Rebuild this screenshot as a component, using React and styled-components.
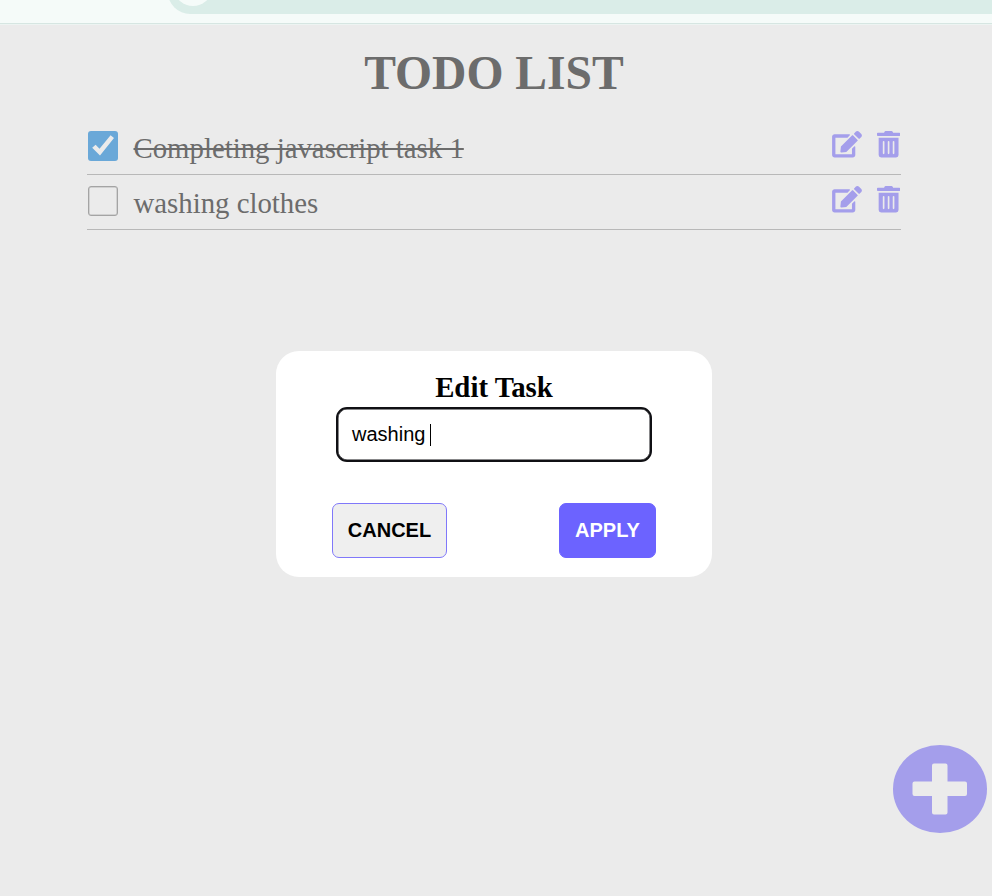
import React from "react";
import styled, { createGlobalStyle } from "styled-components";
import { FaEdit, FaTrashAlt } from "react-icons/fa";

const GlobalStyle = createGlobalStyle`
  * { box-sizing: border-box; }
  body {
    margin: 0;
    background: #ebebeb;
    font-family: "Liberation Serif", "Times New Roman", serif;
    overflow: hidden;
  }
`;

const Page = styled.div`
  position: relative;
  width: 992px;
  height: 896px;
  overflow: hidden;
  background: #ebebeb;
`;

const BrowserBar = styled.header`
  height: 25px;
  background: #f5fbf9;
  padding-left: 168px;
  overflow: hidden;
  box-shadow: inset 0 -1px #edf4f2, inset 0 -2px #d6e6e2;
`;

const AddressPill = styled.div`
  height: 44px;
  margin-top: -30px;
  margin-right: -40px;
  padding: 4px 0 0 7px;
  border-radius: 22px;
  background: #daede8;
`;

const SiteButton = styled.div`
  width: 36px;
  height: 32px;
  border-radius: 50%;
  background: #f5fbf9;
`;

const Main = styled.main`
  width: 814px;
  margin-left: 87px;
  padding-top: 20px;
`;

const Title = styled.h1`
  margin: 0 0 18px;
  height: 57px;
  line-height: 57px;
  font-size: 47.6px;
  text-align: center;
  color: #6c6c6c;
`;

const TaskList = styled.ul`
  list-style: none;
  margin: 0;
  padding: 0;
`;

const Task = styled.li`
  display: flex;
  align-items: flex-start;
  height: 55px;
  padding: 11px 1px 0;
  border-bottom: 1px solid #b8b8b8;
`;

const Checkbox = styled.span`
  display: flex;
  align-items: center;
  justify-content: center;
  width: 30px;
  height: 30px;
  border-radius: 3px;
  border: ${(p) => (p.$checked ? "0" : "1px solid #a4a4a4")};
  box-shadow: ${(p) => (p.$checked ? "none" : "inset 0 0 0 0.5px #b8b8b8")};
  background: ${(p) => (p.$checked ? "#6aa8d8" : "transparent")};
`;

const TaskText = styled.span`
  flex: 1;
  margin-left: 15.5px;
  line-height: 34px;
  font-size: 28.8px;
  color: #6c6c6c;
  text-decoration: ${(p) => (p.$done ? "line-through" : "none")};
  text-decoration-thickness: 2px;
`;

const Actions = styled.span`
  display: flex;
  gap: 15px;
  color: #a49eeb;
`;

const EditIcon = styled(FaEdit)`
  width: 30px;
  height: 26.5px;
`;

const TrashIcon = styled(FaTrashAlt)`
  width: 23.2px;
  height: 26.5px;
`;

const AddButton = styled.button`
  position: absolute;
  left: 892.5px;
  top: 745px;
  width: 94.5px;
  height: 88px;
  padding: 0;
  border: 0;
  border-radius: 50%;
  background: #a49eeb;
  display: flex;
  align-items: center;
  justify-content: center;
`;

const Dialog = styled.section`
  position: absolute;
  left: 276px;
  top: 351px;
  width: 436px;
  height: 226px;
  padding: 19px 56px;
  border-radius: 23px;
  background: #fff;
`;

const DialogTitle = styled.h2`
  margin: 0 0 2px;
  height: 35px;
  line-height: 35px;
  font-size: 28.8px;
  text-align: center;
  color: #000;
`;

const Field = styled.div`
  display: flex;
  align-items: center;
  width: 316px;
  height: 55px;
  margin: 0 4px 41px;
  padding-left: 14px;
  border: 2px solid #101014;
  box-shadow: inset 0 0 0 0.5px #101014;
  border-radius: 11px;
  font: 20px "Liberation Sans", Arial, sans-serif;
  white-space: pre;
  color: #000;
`;

const Caret = styled.span`
  width: 1px;
  height: 22px;
  margin-left: -1px;
  background: #000;
`;

const Buttons = styled.div`
  display: flex;
  justify-content: space-between;
`;

const DialogButton = styled.button`
  width: ${(p) => (p.$primary ? 97 : 115)}px;
  height: 55px;
  padding: 0 0 1px;
  border: 1px solid ${(p) => (p.$primary ? "#6c63ff" : "#8078fa")};
  border-radius: 7px;
  background: ${(p) => (p.$primary ? "#6c63ff" : "#efefef")};
  color: ${(p) => (p.$primary ? "#fff" : "#000")};
  font: bold 20px "Liberation Sans", Arial, sans-serif;
`;

const tasks = [
  { text: "Completing javascript task 1", done: true },
  { text: "washing clothes", done: false },
];

export default function App() {
  return (
    <>
      <GlobalStyle />
      <Page>
        <BrowserBar>
          <AddressPill>
            <SiteButton />
          </AddressPill>
        </BrowserBar>
        <Main>
          <Title>TODO LIST</Title>
          <TaskList>
            {tasks.map((task) => (
              <Task key={task.text}>
                <Checkbox $checked={task.done}>
                  {task.done && (
                    <svg width="30" height="30" viewBox="0 0 30 30">
                      <path d="M22.6 4.2L26 6.9L12 24.5L4.2 16.8L7.6 13.8L11.5 17.8Z" fill="#ebebeb" />
                    </svg>
                  )}
                </Checkbox>
                <TaskText $done={task.done}>{task.text}</TaskText>
                <Actions>
                  <EditIcon />
                  <TrashIcon />
                </Actions>
              </Task>
            ))}
          </TaskList>
        </Main>
        <AddButton aria-label="Add task">
          <svg width="55" height="52" viewBox="0 0 55 52">
            <path
              d="M22 0.5H33.5Q35.5 0.5 35.5 2.5V18.5H53Q55 18.5 55 20.5V31Q55 33 53 33H35.5V49.5Q35.5 51.5 33.5 51.5H22Q20 51.5 20 49.5V33H2.5Q0.5 33 0.5 31V20.5Q0.5 18.5 2.5 18.5H20V2.5Q20 0.5 22 0.5Z"
              fill="#ebebeb"
            />
          </svg>
        </AddButton>
        <Dialog role="dialog" aria-label="Edit Task">
          <DialogTitle>Edit Task</DialogTitle>
          <Field>
            {"washing "}
            <Caret />
          </Field>
          <Buttons>
            <DialogButton>CANCEL</DialogButton>
            <DialogButton $primary>APPLY</DialogButton>
          </Buttons>
        </Dialog>
      </Page>
    </>
  );
}
